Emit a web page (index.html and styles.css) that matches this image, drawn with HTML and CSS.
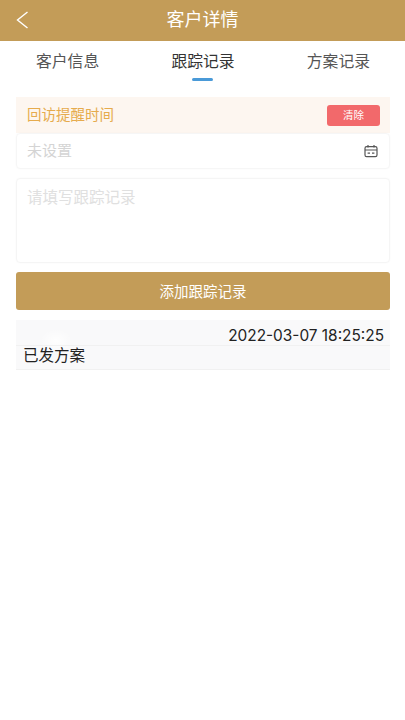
FILE: index.html
```html
<!DOCTYPE html>
<html lang="zh">
<head>
<meta charset="utf-8">
<title>客户详情</title>
<link rel="stylesheet" href="styles.css">
</head>
<body>
<header class="topbar">
  <svg class="back" width="14" height="18" viewBox="0 0 14 18"><path d="M12.5 1 L2.5 9 L12.5 17" fill="none" stroke="#fff" stroke-width="1.4"/></svg>
  <h1 class="title">客户详情</h1>
</header>
<nav class="tabs">
  <div class="tab">客户信息</div>
  <div class="tab active">跟踪记录</div>
  <div class="tab">方案记录</div>
</nav>
<main class="content">
  <div class="reminder">
    <span class="reminder-label">回访提醒时间</span>
    <button class="clear">清除</button>
  </div>
  <div class="date-field">
    <span class="placeholder">未设置</span>
    <svg class="cal" width="14" height="14" viewBox="0 0 14 14"><g fill="none" stroke="#555" stroke-width="1.2"><rect x="1" y="2.6" width="12" height="10" rx="1.6"/><path d="M1 6H13M4 1V3.6M10 1V3.6"/><path d="M3.6 9.2H6M8 9.2H10.4"/></g></svg>
  </div>
  <div class="note">请填写跟踪记录</div>
  <button class="add">添加跟踪记录</button>
  <section class="record">
    <div class="record-time">2022-03-07 18:25:25</div>
    <div class="record-text">已发方案</div>
  </section>
</main>
</body>
</html>
```
FILE: styles.css
```css
* { box-sizing: border-box; }
html, body { margin: 0; padding: 0; }
body {
  width: 405px;
  height: 720px;
  background: #fff;
  font-family: "Noto Sans CJK SC", "Liberation Sans", sans-serif;
  overflow: hidden;
}
.topbar {
  height: 41px;
  background: #c39c58;
  display: flex;
  align-items: center;
  justify-content: center;
  position: relative;
}
.back { position: absolute; left: 15px; top: 11px; }
.title {
  margin: 0;
  font-size: 18px;
  font-weight: 400;
  color: #fff;
  line-height: 37px;
  padding-bottom: 4px;
}
.tabs {
  height: 56px;
  display: flex;
  justify-content: space-between;
  padding: 0 35px 0 36px;
}
.tab {
  position: relative;
  font-size: 15.8px;
  line-height: 22px;
  padding-top: 9px;
  color: #555;
}
.tab.active { color: #333; }
.tab.active::after {
  content: "";
  position: absolute;
  left: 21px;
  top: 36.5px;
  width: 21px;
  height: 3px;
  border-radius: 2px;
  background: #4a9ad8;
}
.content {
  padding: 0 15px 0 16px;
  display: flex;
  flex-direction: column;
}
.reminder {
  height: 36px;
  background: #fdf6f0;
  display: flex;
  align-items: center;
  justify-content: space-between;
  padding: 0 10px 0 11px;
}
.reminder-label { font-size: 14.5px; line-height: 20px; padding-bottom: 2px; color: #e6ab4d; }
.clear {
  width: 53px;
  height: 21px;
  border: 0;
  padding: 0 0 1px;
  border-radius: 3px;
  background: #f2696b;
  color: #fff;
  font: inherit;
  font-size: 10.5px;
  line-height: 20px;
}
.date-field {
  height: 36px;
  border: 1px solid #f6f6f6;
  border-radius: 4px;
  display: flex;
  align-items: center;
  justify-content: space-between;
  padding: 0 11px 0 10px;
  box-shadow: 0 0 2px rgba(0,0,0,.03);
}
.placeholder { font-size: 15px; line-height: 20px; padding-bottom: 2px; color: #d4d4d4; }
.note {
  margin-top: 9px;
  height: 85px;
  border: 1px solid #f5f5f5;
  border-radius: 4px;
  padding: 6px 10px;
  font-size: 15.5px;
  line-height: 22px;
  color: #e0e0e0;
  box-shadow: 0 0 2px rgba(0,0,0,.03);
}
.add {
  margin-top: 9px;
  height: 38px;
  border: 0;
  padding: 0 0 2px;
  border-radius: 3px;
  background: #c39c58;
  color: #fff;
  font: inherit;
  font-size: 14.5px;
}
.record {
  margin-top: 10px;
  height: 50px;
  background:
    radial-gradient(ellipse 16px 12px at 40px 21px, rgba(255,255,255,.9), rgba(255,255,255,0)),
    #f9f9fa;
  border-bottom: 1px solid #f1f1f1;
  padding-top: 6px;
  display: flex;
  flex-direction: column;
}
.record-time {
  height: 20px;
  text-align: right;
  font-family: "Inter", "Liberation Sans", sans-serif;
  font-size: 15.4px;
  line-height: 19px;
  color: #222;
  border-bottom: 1px solid #f1f1f1;
  padding-right: 6px;
}
.record-text {
  font-size: 15.5px;
  line-height: 17px;
  color: #222;
  padding-left: 7px;
}
```
